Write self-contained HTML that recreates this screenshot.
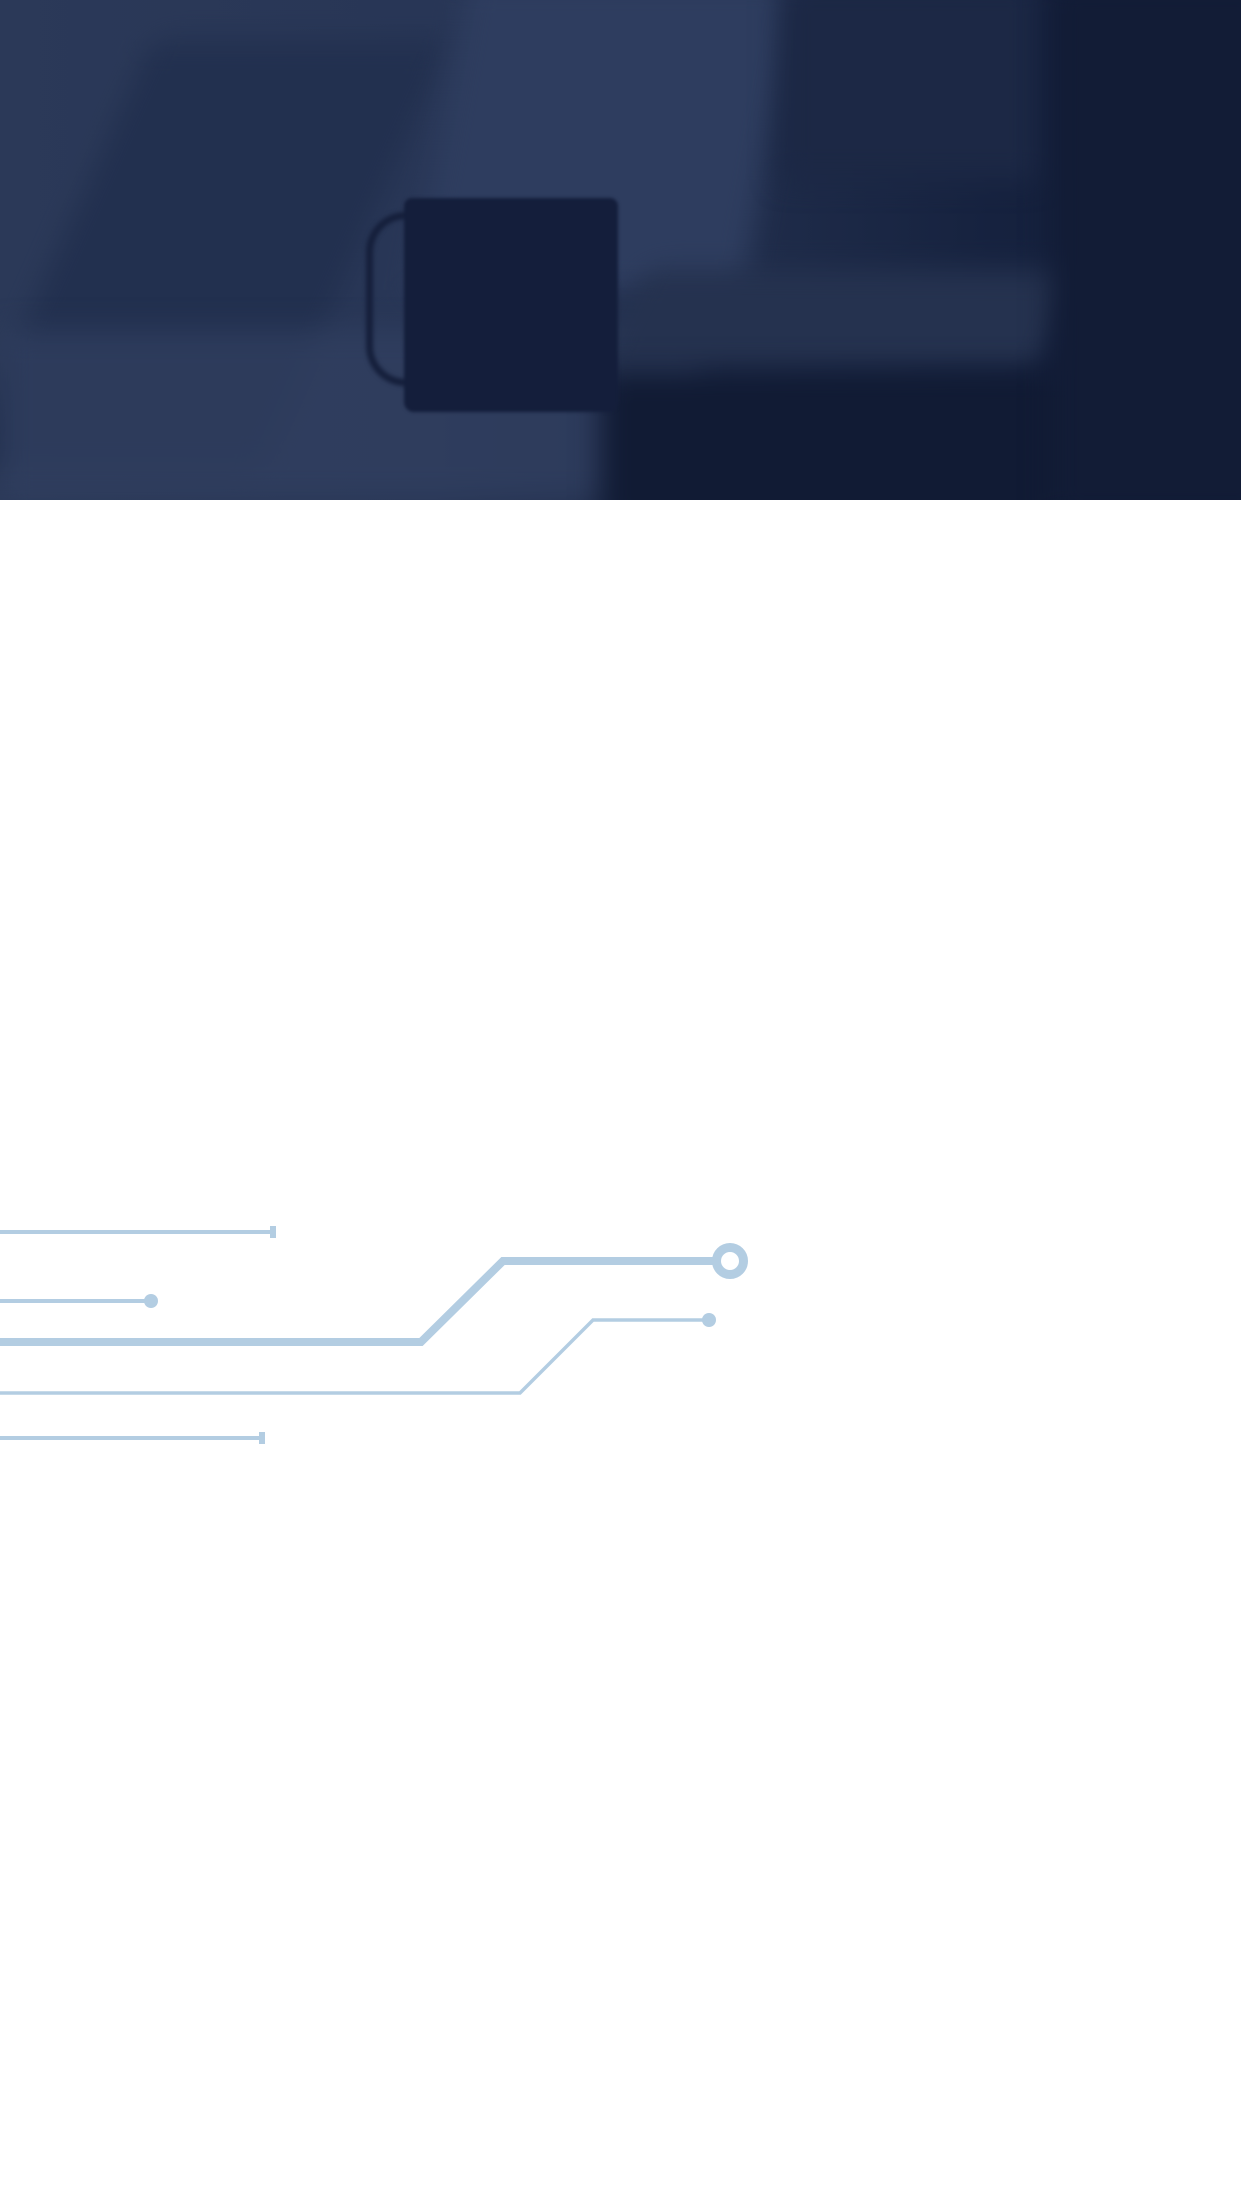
<!DOCTYPE html>
<html><head><meta charset="utf-8"><style>
html,body{margin:0;padding:0;background:#fff;width:1241px;height:2208px;overflow:hidden}
.hero{position:absolute;left:0;top:0;width:1241px;height:500px;overflow:hidden;
background:linear-gradient(90deg,#2b3958 0%,#283656 35%,#1f2c4a 60%,#16223f 80%,#121d38 100%)}
.s{position:absolute}
.b{filter:blur(14px)}
</style></head><body>
<div class="hero">
  <div class="s b" style="left:-40px;top:40px;width:300px;height:430px;background:#22304f;transform:skewX(-24deg);transform-origin:bottom left"></div>
  <div class="s b" style="left:0;top:330px;width:700px;height:170px;background:rgba(50,64,97,.7)"></div>
  <div class="s b" style="left:440px;top:-20px;width:330px;height:310px;background:#2e3d5f;transform:skewX(-10deg)"></div>
  <div class="s b" style="left:780px;top:-20px;width:260px;height:200px;background:#1c2845"></div>
  <div class="s b" style="left:620px;top:270px;width:440px;height:100px;background:#25324f;transform:skewX(-25deg)"></div>
  <div class="s b" style="left:600px;top:370px;width:700px;height:160px;background:#111b34"></div>
  <div class="s b" style="left:1050px;top:-20px;width:220px;height:540px;background:#121c36"></div>
  <div class="s" style="left:366px;top:212px;width:44px;height:160px;border:7px solid #151f3b;border-right:none;border-radius:40px 0 0 40px;filter:blur(2px)"></div>
  <div class="s" style="left:404px;top:198px;width:214px;height:214px;background:#141e3b;border-radius:8px 8px 10px 10px;filter:blur(1.5px)"></div>
</div>
<svg width="1241" height="2208" style="position:absolute;left:0;top:0" xmlns="http://www.w3.org/2000/svg">
  <g stroke="#b3cde2" fill="none" stroke-linejoin="miter">
    <line x1="0" y1="1232" x2="272" y2="1232" stroke-width="4"/>
    <line x1="0" y1="1301" x2="150" y2="1301" stroke-width="4"/>
    <polyline points="0,1342 421,1342 503,1261 714,1261" stroke-width="8"/>
    <polyline points="0,1393 520,1393 593,1320 708,1320" stroke-width="3.5"/>
    <line x1="0" y1="1438" x2="262" y2="1438" stroke-width="4"/>
    <circle cx="730" cy="1261" r="13.5" stroke-width="9"/>
  </g>
  <g fill="#b3cde2">
    <rect x="270" y="1226" width="6" height="12"/>
    <rect x="259" y="1432" width="6" height="12"/>
    <circle cx="151" cy="1301" r="7"/>
    <circle cx="709" cy="1320" r="7"/>
  </g>
</svg>
</body></html>
